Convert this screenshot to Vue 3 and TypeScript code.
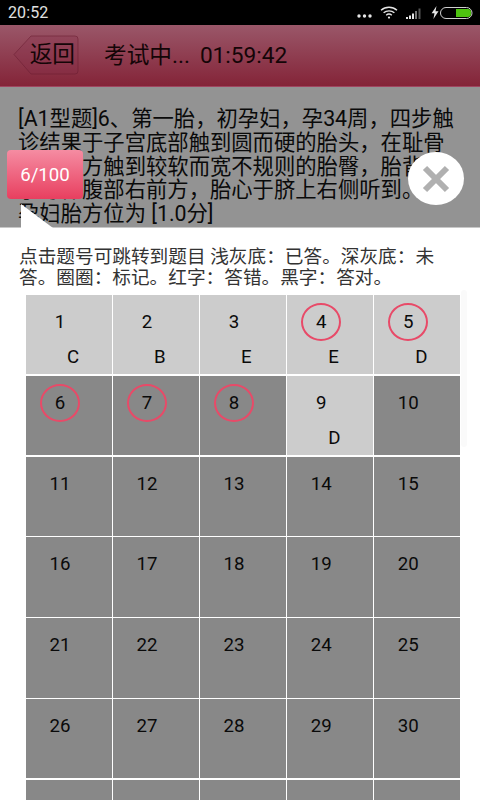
<script setup lang="ts">
interface Cell {
  n: number
  answer: string
  marked: boolean
}

const answers: Record<number, string> = { 1: 'C', 2: 'B', 3: 'E', 4: 'E', 5: 'D', 9: 'D' }
const marked = new Set<number>([4, 5, 6, 7, 8])

const cells: Cell[] = Array.from({ length: 100 }, (_, i) => {
  const n = i + 1
  return { n, answer: answers[n] ?? '', marked: marked.has(n) }
})
</script>

<template>
  <div class="page">
    <div class="status">
      <span class="clock">20:52</span>
      <div class="status-icons">
        <svg class="dots" width="15" height="4" viewBox="0 0 15 4">
          <circle cx="2" cy="2" r="1.7" fill="#e6e6e6" />
          <circle cx="7.5" cy="2" r="1.7" fill="#e6e6e6" />
          <circle cx="13" cy="2" r="1.7" fill="#e6e6e6" />
        </svg>
        <svg class="wifi" width="18" height="13" viewBox="0 0 18 13" fill="none" stroke="#e6e6e6" stroke-width="1.4">
          <path d="M1 4.2C5.6.2 12.4.2 17 4.2" />
          <path d="M3.6 6.8c3.1-2.6 7.7-2.6 10.8 0" />
          <path d="M6.2 9.2c1.6-1.3 4-1.3 5.6 0" />
          <circle cx="9" cy="11.6" r="1.1" fill="#e6e6e6" stroke="none" />
        </svg>
        <svg class="signal" width="16" height="11" viewBox="0 0 16 11">
          <rect x="0" y="9" width="2" height="2" fill="#e6e6e6" />
          <rect x="3" y="7.5" width="2" height="3.5" fill="#e6e6e6" />
          <rect x="6" y="5.5" width="2" height="5.5" fill="#e6e6e6" />
          <rect x="9" y="3" width="2" height="8" fill="#777" />
          <rect x="12.5" y="0.5" width="2" height="10.5" fill="#555" />
        </svg>
        <svg class="bolt" width="8" height="13" viewBox="0 0 8 13">
          <path d="M5.5 0 0.6 7.2h2.9L2.4 13 7.5 5.2H4.5L5.5 0z" fill="#e6e6e6" />
        </svg>
        <svg class="battery" width="33" height="12" viewBox="0 0 33 12">
          <rect x="0.5" y="0.5" width="31.5" height="11" rx="5.5" fill="none" stroke="#cfcfcf" />
          <path d="M16 2h12a3 3 0 0 1 3 3v2a3 3 0 0 1-3 3H16z" fill="#4ec410" />
        </svg>
      </div>
    </div>

    <header class="bar">
      <button class="back" type="button">
        <svg class="back-shape" width="66" height="40" viewBox="0 0 66 40">
          <path
            d="M1 19.5 18 1h44a3 3 0 0 1 3 3v32a3 3 0 0 1-3 3H18L1 19.5z"
            fill="rgba(130,45,70,.25)"
            stroke="rgba(105,30,50,.55)"
          />
        </svg>
        <span class="back-label">返回</span>
      </button>
      <h1 class="title"><span>考试中...</span><span>01:59:42</span></h1>
    </header>

    <section class="question">
      [A1型题]6、第一胎，初孕妇，孕34周，四步触诊结果于子宫底部触到圆而硬的胎头，在耻骨联合上方触到较软而宽不规则的胎臀，胎背位于母体腹部右前方，胎心于脐上右侧听到。该孕妇胎方位为 [1.0分]
    </section>

    <section class="sheet">
      <p class="legend">点击题号可跳转到题目 浅灰底：已答。深灰底：未答。圈圈：标记。红字：答错。黑字：答对。</p>
      <div class="grid">
        <div v-for="c in cells" :key="c.n" class="cell" :class="{ done: c.answer }">
          <span class="num" :class="{ ring: c.marked }">{{ c.n }}</span>
          <span class="ans">{{ c.answer }}</span>
        </div>
      </div>
    </section>

    <div class="scrollbar"></div>
    <div class="badge">6/100</div>
    <svg class="pointer" width="32" height="24" viewBox="0 0 32 24">
      <path d="M0 0 32 24H0z" fill="#fff" />
    </svg>
    <button class="close" type="button" aria-label="关闭">
      <svg width="28" height="28" viewBox="0 0 28 28">
        <path d="M3 3 25 25M25 3 3 25" stroke="#b0b0b0" stroke-width="6" fill="none" />
      </svg>
    </button>
  </div>
</template>

<style>
html,
body {
  margin: 0;
  background: #fff;
}
</style>

<style scoped>
.page {
  position: relative;
  width: 480px;
  height: 800px;
  overflow: hidden;
  display: flex;
  flex-direction: column;
  font-family: Roboto, "Noto Sans CJK SC", sans-serif;
  color: #000;
}

.status {
  flex: none;
  height: 25px;
  background: #000;
  display: flex;
  align-items: center;
  justify-content: space-between;
  padding: 0 7px 0 8px;
}

.clock {
  color: #e0e0e0;
  font-size: 16px;
  letter-spacing: 0.1px;
}

.status-icons {
  display: flex;
  align-items: center;
}

.dots {
  margin-top: 6px;
}

.wifi {
  margin-left: 8px;
  margin-top: -1px;
}

.signal {
  margin-left: 8px;
  margin-top: 1px;
}

.bolt {
  margin-left: 9px;
}

.battery {
  margin-left: 1px;
}

.bar {
  flex: none;
  height: 62px;
  box-sizing: border-box;
  display: flex;
  align-items: center;
  padding: 0 0 0 13px;
  gap: 25px;
  background: linear-gradient(#9a5769, #842438);
  border-bottom: 1px solid #a04560;
}

.back {
  display: grid;
  padding: 0;
  border: 0;
  background: none;
  font: inherit;
  color: inherit;
  margin-top: -1px;
}

.back-shape,
.back-label {
  grid-area: 1 / 1;
}

.back-label {
  align-self: center;
  justify-self: end;
  margin-right: 4px;
  font-size: 22.67px;
  line-height: 24px;
  color: #140507;
}

.title {
  margin: 0;
  display: flex;
  gap: 10px;
  font-size: 22.67px;
  font-weight: 400;
  line-height: 26px;
  color: #140507;
}

.question {
  flex: none;
  height: 141px;
  box-sizing: border-box;
  padding: 20px 22px 0 18px;
  overflow: hidden;
  background: #939393;
  font-size: 21.33px;
  line-height: 23.75px;
  color: #0a0a0a;
}

.sheet {
  flex: 1;
  min-height: 0;
  background: #fff;
  border-top: 1px solid #c8c8c8;
  margin-top: -1px;
}

.legend {
  margin: 19px 14px 0 19px;
  font-size: 18.67px;
  line-height: 21px;
  color: #333;
}

.grid {
  display: grid;
  grid-template-columns: repeat(5, 85.73px);
  grid-auto-rows: 79.47px;
  gap: 1.33px;
  margin: 6px 0 0 26px;
}

.cell {
  background: #888;
  display: flex;
  flex-direction: column;
  align-items: flex-start;
  font-size: 18.67px;
  line-height: 22px;
  color: #0a0a0a;
}

.cell.done {
  background: #ccc;
}

.num {
  box-sizing: border-box;
  width: 40px;
  height: 38px;
  margin: 8px 0 0 14px;
  display: flex;
  align-items: center;
  justify-content: center;
  border: 2.7px solid transparent;
  border-radius: 50%;
}

.num.ring {
  border-color: #e84a68;
}

.ans {
  margin: 5px 0 0 41px;
}

.scrollbar {
  position: absolute;
  left: 461px;
  top: 290px;
  width: 6px;
  height: 157px;
  border-radius: 3px;
  background: #fafafa;
}

.badge {
  position: absolute;
  left: 7px;
  top: 150px;
  width: 76px;
  height: 49px;
  display: flex;
  align-items: center;
  justify-content: center;
  border-radius: 4px;
  background: linear-gradient(#f58ca2, #e83f5f);
  color: #fff;
  font-size: 18.67px;
}

.pointer {
  position: absolute;
  left: 21px;
  top: 204px;
}

.close {
  position: absolute;
  left: 408px;
  top: 152px;
  width: 56px;
  height: 53px;
  padding: 0;
  border: 0;
  border-radius: 50%;
  background: #fff;
  display: flex;
  align-items: center;
  justify-content: center;
}
</style>
